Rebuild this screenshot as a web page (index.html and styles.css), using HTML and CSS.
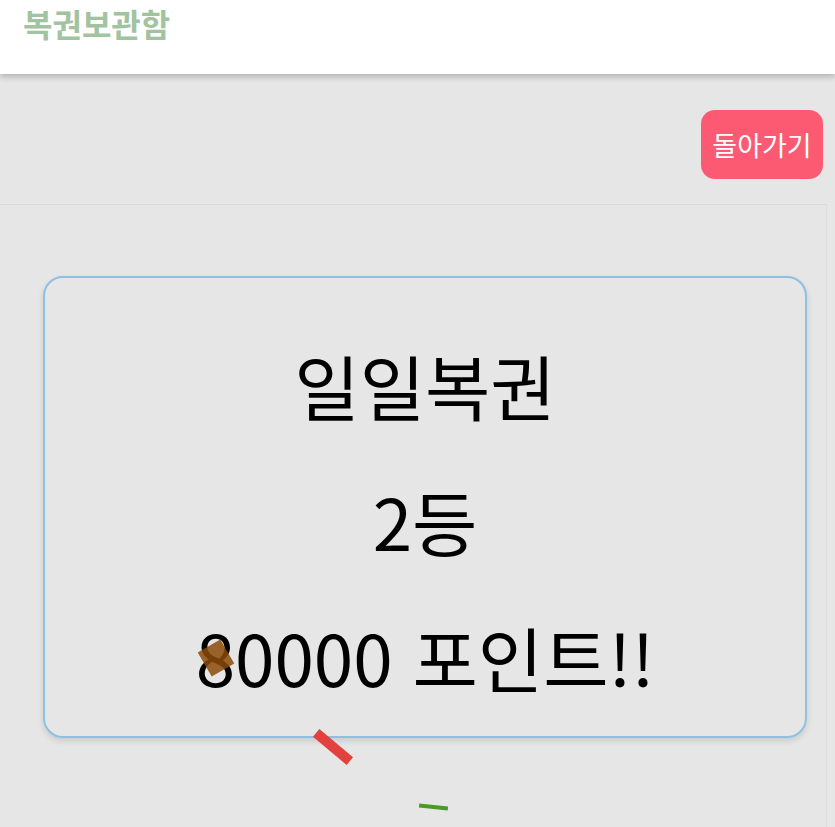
FILE: index.html
```html
<!DOCTYPE html>
<html lang="ko">

<head>
    <meta charset="utf-8">
    <meta name="viewport" content="width=device-width, initial-scale=1.0">
    <title>복권보관함</title>
    <link rel="stylesheet" href="styles.css">
</head>

<body>
    <header class="topbar">
        <h2>복권보관함</h2>
    </header>
    <div class="actions">
        <button class="tilbage">돌아가기</button>
    </div>
    <section class="resultat">
        <article class="kort">
            <p>일일복권</p>
            <p>2등</p>
            <p>80000 포인트!!</p>
        </article>
        <span class="konfetti brun"></span>
        <span class="konfetti rod"></span>
        <span class="konfetti gron"></span>
    </section>
</body>

</html>
```

FILE: styles.css
```css
body {
    margin: 0;
    background-color: #e6e6e6;
    font-family: "Noto Sans CJK KR", "Noto Sans", sans-serif;
    height: 827px;
    overflow: hidden;
}

.topbar {
    height: 74px;
    background-color: white;
    box-shadow: 0 3px 6px rgba(0, 0, 0, 0.22);
    position: relative;
    z-index: 2;
}

.topbar h2 {
    margin: 0;
    padding-left: 23px;
    font-size: 32px;
    line-height: 46px;
    font-weight: 700;
    color: #a2c3a0;
}

.actions {
    display: flex;
    justify-content: flex-end;
    padding: 36px 12px 25px 0;
}

.tilbage {
    width: 122px;
    height: 69px;
    padding: 0;
    border: none;
    border-radius: 14px;
    background-color: #fb5a72;
    color: white;
    font-family: inherit;
    font-size: 27px;
}

.resultat {
    position: relative;
    box-sizing: border-box;
    border-top: 1px solid #dadada;
    border-right: 1px solid #dedede;
    margin-right: 8px;
    padding: 71px 19px 0 43px;
    height: 623px;
}

.kort {
    position: relative;
    border: 2px solid #8fc0df;
    border-radius: 20px;
    box-shadow: 0 3px 6px rgba(0, 0, 0, 0.12);
    height: 462px;
    box-sizing: border-box;
    text-align: center;
    display: flex;
    flex-direction: column;
    justify-content: center;
    gap: 30px;
    padding-top: 26px;
}

.kort p {
    margin: 0;
    font-size: 71px;
    line-height: 106px;
    color: black;
}

/* konfetti */

.konfetti {
    position: absolute;
}

.brun {
    left: 203px;
    top: 439px;
    width: 26px;
    height: 28px;
    background-color: #8a4a08;
    transform: rotate(-30deg);
    opacity: 0.85;
}

.rod {
    left: 311px;
    top: 537px;
    width: 44px;
    height: 10px;
    background-color: #e2413d;
    transform: rotate(40deg);
}

.gron {
    left: 419px;
    top: 600px;
    width: 29px;
    height: 4px;
    background-color: #4a9a25;
    transform: rotate(6deg);
}
```
